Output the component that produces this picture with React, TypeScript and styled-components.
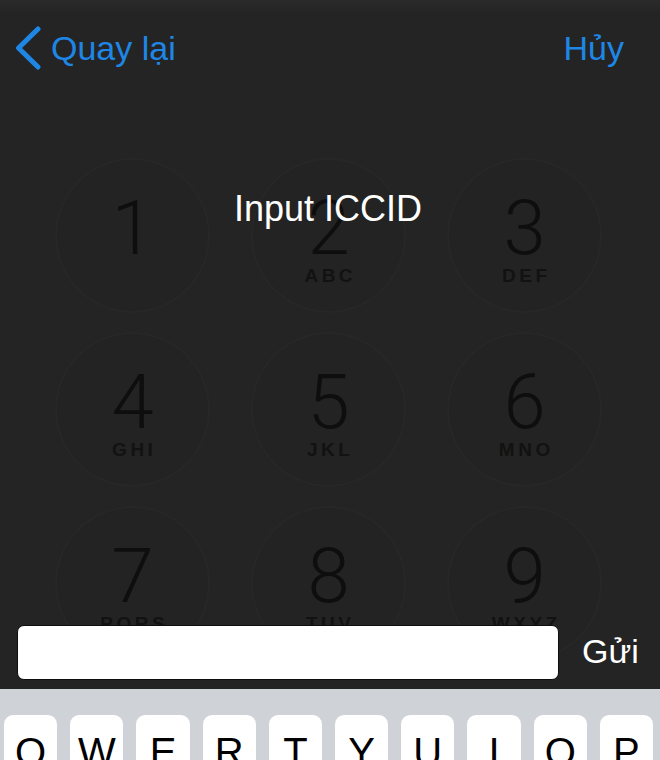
import React from "react";
import styled, { createGlobalStyle } from "styled-components";

const GlobalStyle = createGlobalStyle`
  html, body { margin: 0; padding: 0; background: #242424; }
  body { font-family: "Liberation Sans", Arial, sans-serif; }
  * { box-sizing: border-box; }
`;

const Screen = styled.div`
  position: relative;
  width: 660px;
  height: 760px;
  overflow: hidden;
  background: #242424;
  display: flex;
  flex-direction: column;
`;

const StatusBlur = styled.div`
  height: 14px;
  background: linear-gradient(#2b2b2b, #242424);
  flex-shrink: 0;
`;

const NavBar = styled.div`
  margin-top: 14px;
  height: 40px;
  display: flex;
  align-items: center;
  justify-content: space-between;
  padding: 0 36px 0 15px;
  flex-shrink: 0;
`;

const NavButton = styled.button`
  display: flex;
  align-items: center;
  gap: 10px;
  background: none;
  border: 0;
  padding: 0;
  color: #1e87e6;
  font-family: "Liberation Sans", Arial, sans-serif;
  font-size: 34px;
  line-height: 1;
  cursor: pointer;
`;

const Keypad = styled.div`
  margin-top: 90px;
  padding-left: 55px;
  display: grid;
  grid-template-columns: repeat(3, 155px);
  column-gap: 41px;
  row-gap: 19px;
`;

const KeyCircle = styled.div`
  width: 155px;
  height: 155px;
  border-radius: 50%;
  background: rgba(0, 0, 0, 0.025);
  box-shadow: inset 0 0 0 2px rgba(255, 255, 255, 0.018);
  display: flex;
  flex-direction: column;
  align-items: center;
  padding-top: 32px;
`;

const Digit = styled.div`
  font-family: Roboto, "Liberation Sans", sans-serif;
  font-weight: 300;
  font-size: 76px;
  line-height: 1;
  color: #0e0e0e;
`;

const Letters = styled.div`
  font-family: "Liberation Sans", Arial, sans-serif;
  font-weight: 700;
  font-size: 19px;
  line-height: 20px;
  letter-spacing: 3.5px;
  padding-left: 3.5px;
  color: #121212;
`;

const Title = styled.div`
  position: absolute;
  top: 191px;
  left: 0;
  right: 4px;
  text-align: center;
  color: #ffffff;
  font-family: "Liberation Sans", Arial, sans-serif;
  font-size: 36px;
  line-height: 1;
`;

const Dock = styled.div`
  position: absolute;
  left: 0;
  right: 0;
  bottom: 0;
  display: flex;
  flex-direction: column;
`;

const InputRow = styled.div`
  display: flex;
  align-items: center;
  gap: 23px;
  padding: 0 0 9px 17px;
`;

const Field = styled.div`
  width: 542px;
  height: 55px;
  background: #ffffff;
  border: 1px solid #0e0e0e;
  border-radius: 7px;
`;

const SendButton = styled.button`
  background: none;
  border: 0;
  padding: 0;
  color: #ffffff;
  font-family: "Liberation Sans", Arial, sans-serif;
  font-size: 34px;
  line-height: 1;
  margin-top: -4px;
`;

const Keyboard = styled.div`
  height: 71px;
  background: #cfd2d7;
  padding: 26px 7px 0 4px;
  display: grid;
  grid-template-columns: repeat(10, 1fr);
  column-gap: 13px;
  align-items: start;
`;

const Key = styled.div`
  height: 76px;
  background: #ffffff;
  border-radius: 9px;
  box-shadow: 0 1px 0 #8a8c90;
  display: flex;
  justify-content: center;
  padding-top: 17px;
  font-family: "Liberation Sans", Arial, sans-serif;
  font-size: 40px;
  line-height: 1;
  color: #000;
`;

const keys: [string, string][] = [
  ["1", ""],
  ["2", "ABC"],
  ["3", "DEF"],
  ["4", "GHI"],
  ["5", "JKL"],
  ["6", "MNO"],
  ["7", "PQRS"],
  ["8", "TUV"],
  ["9", "WXYZ"],
];

const kbd = ["Q", "W", "E", "R", "T", "Y", "U", "I", "O", "P"];

const Chevron = () => (
  <svg width="26" height="44" viewBox="0 0 26 44" aria-hidden="true">
    <path
      d="M23 3 L3.5 22 L23 41"
      fill="none"
      stroke="#1e87e6"
      strokeWidth="5"
      strokeLinecap="round"
      strokeLinejoin="round"
    />
  </svg>
);

export default function App() {
  return (
    <>
      <GlobalStyle />
      <Screen>
        <StatusBlur />
        <NavBar>
          <NavButton>
            <Chevron />
            <span>Quay lại</span>
          </NavButton>
          <NavButton>Hủy</NavButton>
        </NavBar>
        <Keypad>
          {keys.map(([d, l]) => (
            <KeyCircle key={d}>
              <Digit>{d}</Digit>
              <Letters>{l || "\u00a0"}</Letters>
            </KeyCircle>
          ))}
        </Keypad>
        <Title>Input ICCID</Title>
        <Dock>
          <InputRow>
            <Field />
            <SendButton>Gửi</SendButton>
          </InputRow>
          <Keyboard>
            {kbd.map((k) => (
              <Key key={k}>{k}</Key>
            ))}
          </Keyboard>
        </Dock>
      </Screen>
    </>
  );
}
